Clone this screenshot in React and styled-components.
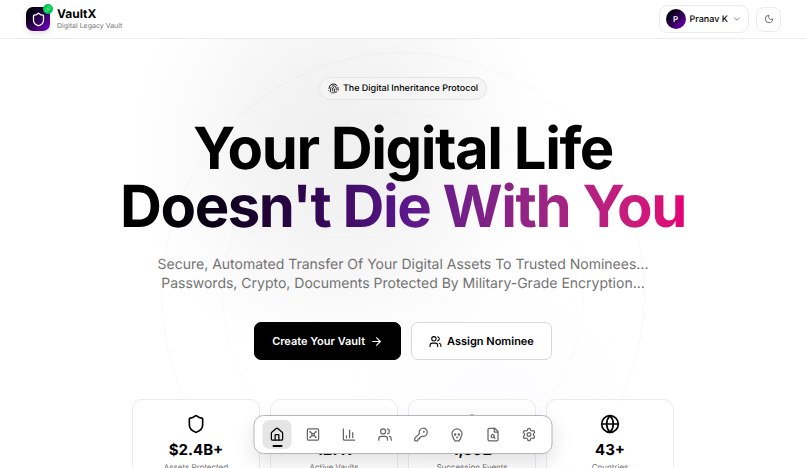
import styled, { createGlobalStyle, css } from "styled-components";
import {
  ArrowRight,
  ChartColumn,
  ChevronDown,
  FileSearch,
  Fingerprint,
  Globe,
  House,
  KeyRound,
  Link,
  Moon,
  Settings,
  Shield,
  Skull,
  Timer,
  Users,
  Vault,
} from "lucide-react";

const GlobalStyle = createGlobalStyle`
  * {
    box-sizing: border-box;
  }
  body {
    margin: 0;
    background: #fff;
    color: #000;
    font-family: Inter, "Liberation Sans", sans-serif;
    text-rendering: geometricPrecision;
    overflow: hidden;
  }
  button {
    font-family: inherit;
    color: inherit;
    text-rendering: inherit;
    cursor: pointer;
  }
`;

const Page = styled.div`
  position: relative;
  height: 100vh;
  overflow: hidden;
`;

const Header = styled.header`
  position: relative;
  z-index: 2;
  display: flex;
  align-items: center;
  justify-content: space-between;
  height: 39px;
  padding: 0 25px 0 26px;
  background: #fff;
  border-bottom: 1px solid #ececec;
`;

const Brand = styled.a`
  display: flex;
  align-items: center;
  gap: 7px;
  color: inherit;
  text-decoration: none;
`;

const Logo = styled.span`
  position: relative;
  display: flex;
  align-items: center;
  justify-content: center;
  width: 24px;
  height: 24px;
  border-radius: 7px;
  color: #fff;
  background: linear-gradient(135deg in oklab, #000, #7a00d0);
  box-shadow: 0 3px 6px rgba(0, 0, 0, 0.1);
`;

const LogoBadge = styled.span`
  position: absolute;
  top: -3px;
  right: -3px;
  display: flex;
  align-items: center;
  justify-content: center;
  width: 10px;
  height: 10px;
  border-radius: 50%;
  color: #b9f8cf;
  background: #00c950;
`;

const BrandText = styled.span`
  display: flex;
  flex-direction: column;
`;

const BrandName = styled.span`
  font-size: 12px;
  font-weight: 700;
  line-height: 14px;
`;

const BrandTagline = styled.span`
  font-size: 7px;
  line-height: 10px;
  color: #737373;
`;

const HeaderActions = styled.div`
  display: flex;
  align-items: center;
  gap: 7px;
`;

const UserButton = styled.button`
  display: flex;
  align-items: center;
  gap: 4px;
  height: 28px;
  padding: 0 6px;
  background: #fff;
  border: 1px solid #ebebeb;
  border-radius: 9px;
  font-size: 9px;
  font-weight: 500;

  svg {
    color: #737373;
  }
`;

const Avatar = styled.span`
  display: flex;
  align-items: center;
  justify-content: center;
  width: 20px;
  height: 20px;
  border-radius: 50%;
  color: #fff;
  font-size: 8px;
  font-weight: 600;
  background: linear-gradient(135deg in oklab, #000, #7a00d0);
`;

const ThemeButton = styled.button`
  display: flex;
  align-items: center;
  justify-content: center;
  width: 25px;
  height: 25px;
  padding: 0;
  color: #525252;
  background: #fff;
  border: 1px solid #ebebeb;
  border-radius: 8px;
`;

const Hero = styled.main`
  position: relative;
  display: flex;
  flex-direction: column;
  align-items: center;
  padding: 38px 24px 0;
`;

const Glow = styled.div`
  position: absolute;
  border-radius: 50%;
  pointer-events: none;
  ${({ $tone }) =>
    $tone === "dark"
      ? css`
          top: -120px;
          left: calc(50% - 274px);
          width: 420px;
          height: 460px;
          background: radial-gradient(
            closest-side,
            rgba(0, 0, 0, 0.06),
            rgba(0, 0, 0, 0.05) 30%,
            rgba(0, 0, 0, 0.01) 80%,
            transparent
          );
        `
      : css`
          top: 220px;
          left: calc(50% - 70px);
          width: 320px;
          height: 320px;
          background: radial-gradient(
            closest-side,
            rgba(120, 40, 220, 0.02),
            transparent
          );
        `}
`;

const Ring = styled.div`
  position: absolute;
  top: 255px;
  left: 50%;
  width: ${({ $size }) => $size}px;
  height: ${({ $size }) => $size}px;
  border: 1px solid rgba(0, 0, 0, ${({ $alpha }) => $alpha});
  border-radius: 50%;
  transform: translate(-50%, -50%);
  pointer-events: none;
`;

const Pill = styled.div`
  position: relative;
  display: flex;
  align-items: center;
  gap: 4px;
  height: 23px;
  padding: 0 8px;
  background: #f5f5f5;
  border: 1px solid #e5e5e5;
  border-radius: 12px;
  font-size: 9px;
  font-weight: 500;
`;

const Title = styled.h1`
  position: relative;
  margin: 19px 0 0;
  font-size: 58px;
  font-weight: 700;
  line-height: 58px;
  letter-spacing: -0.025em;
  text-align: center;
`;

const TitleAccent = styled.span`
  display: block;
  color: transparent;
  background: linear-gradient(to right in oklab, #000, #59168b 50%, #e60076);
  background-clip: text;
`;

const Lead = styled.p`
  position: relative;
  margin: 20px 0 0;
  font-size: 14px;
  line-height: 19px;
  text-align: center;
  color: #737373;
`;

const LeadLine = styled.span`
  display: block;
`;

const Actions = styled.div`
  position: relative;
  display: flex;
  gap: 10px;
  margin-top: 29px;
`;

const ActionButton = styled.button`
  display: flex;
  align-items: center;
  gap: 5px;
  height: 38px;
  padding: 0 17px;
  border: 1px solid ${({ $primary }) => ($primary ? "#000" : "#d8d8d8")};
  border-radius: 7px;
  color: ${({ $primary }) => ($primary ? "#fff" : "#000")};
  background: ${({ $primary }) => ($primary ? "#000" : "#fff")};
  font-size: 11px;
  font-weight: 600;
`;

const Stats = styled.section`
  position: relative;
  display: grid;
  grid-template-columns: repeat(4, 1fr);
  gap: 10px;
  width: 100%;
  max-width: 542px;
  margin-top: 39px;
`;

const StatCard = styled.article`
  display: flex;
  flex-direction: column;
  align-items: center;
  padding: 14px 0;
  background: rgba(255, 255, 255, 0.7);
  border: 1px solid #ebebeb;
  border-radius: 10px;
`;

const StatValue = styled.strong`
  margin-top: 6px;
  font-size: 15px;
  font-weight: 700;
  line-height: 20px;
`;

const StatLabel = styled.span`
  margin-top: 1px;
  font-size: 8px;
  line-height: 12px;
  color: #737373;
`;

const Dock = styled.nav`
  position: fixed;
  bottom: 14px;
  left: 50%;
  z-index: 3;
  display: flex;
  gap: 7px;
  padding: 4px 8px;
  background: #fff;
  border: 1px solid #b5b5b5;
  border-radius: 10px;
  box-shadow: 0 8px 20px rgba(0, 0, 0, 0.12);
  transform: translateX(-50%);
`;

const DockItem = styled.a`
  position: relative;
  display: flex;
  align-items: center;
  justify-content: center;
  width: 29px;
  height: 29px;
  border-radius: 7px;
  color: ${({ $active }) => ($active ? "#000" : "#666")};
  background: ${({ $active }) => ($active ? "#e5e5e5" : "transparent")};

  ${({ $active }) =>
    $active &&
    css`
      &::after {
        content: "";
        position: absolute;
        bottom: 2px;
        width: 10px;
        height: 2px;
        border-radius: 1px;
        background: #000;
      }
    `}
`;

const stats = [
  { icon: Shield, value: "$2.4B+", label: "Assets Protected" },
  { icon: Users, value: "127K", label: "Active Vaults" },
  { icon: Timer, value: "1,892", label: "Succession Events" },
  { icon: Globe, value: "43+", label: "Countries" },
];

const dockItems = [
  { icon: House, label: "Home" },
  { icon: Vault, label: "Vault" },
  { icon: ChartColumn, label: "Analytics" },
  { icon: Users, label: "Nominees" },
  { icon: KeyRound, label: "Keys" },
  { icon: Skull, label: "Succession" },
  { icon: FileSearch, label: "Audit" },
  { icon: Settings, label: "Settings" },
];

const TopBar = () => (
  <Header>
    <Brand href="#">
      <Logo>
        <Shield size={15} />
        <LogoBadge>
          <Link size={6} />
        </LogoBadge>
      </Logo>
      <BrandText>
        <BrandName>VaultX</BrandName>
        <BrandTagline>Digital Legacy Vault</BrandTagline>
      </BrandText>
    </Brand>
    <HeaderActions>
      <UserButton type="button">
        <Avatar>P</Avatar>
        Pranav K
        <ChevronDown size={10} />
      </UserButton>
      <ThemeButton type="button" aria-label="Toggle theme">
        <Moon size={10} />
      </ThemeButton>
    </HeaderActions>
  </Header>
);

const App = () => (
  <Page>
    <GlobalStyle />
    <TopBar />
    <Hero>
      <Glow $tone="dark" />
      <Glow $tone="violet" />
      <Ring $size={484} $alpha={0.03} />
      <Ring $size={362} $alpha={0.02} />
      <Pill>
        <Fingerprint size={11} />
        The Digital Inheritance Protocol
      </Pill>
      <Title>
        Your Digital Life
        <TitleAccent>Doesn't Die With You</TitleAccent>
      </Title>
      <Lead>
        <LeadLine>
          Secure, Automated Transfer Of Your Digital Assets To Trusted
          Nominees...
        </LeadLine>
        <LeadLine>
          Passwords, Crypto, Documents Protected By Military-Grade
          Encryption...
        </LeadLine>
      </Lead>
      <Actions>
        <ActionButton type="button" $primary>
          Create Your Vault
          <ArrowRight size={13} />
        </ActionButton>
        <ActionButton type="button">
          <Users size={13} />
          Assign Nominee
        </ActionButton>
      </Actions>
      <Stats>
        {stats.map(({ icon: Icon, value, label }) => (
          <StatCard key={label}>
            <Icon size={20} />
            <StatValue>{value}</StatValue>
            <StatLabel>{label}</StatLabel>
          </StatCard>
        ))}
      </Stats>
    </Hero>
    <Dock>
      {dockItems.map(({ icon: Icon, label }, index) => (
        <DockItem
          key={label}
          href="#"
          aria-label={label}
          $active={index === 0}
        >
          <Icon size={15} />
        </DockItem>
      ))}
    </Dock>
  </Page>
);

export default App;
